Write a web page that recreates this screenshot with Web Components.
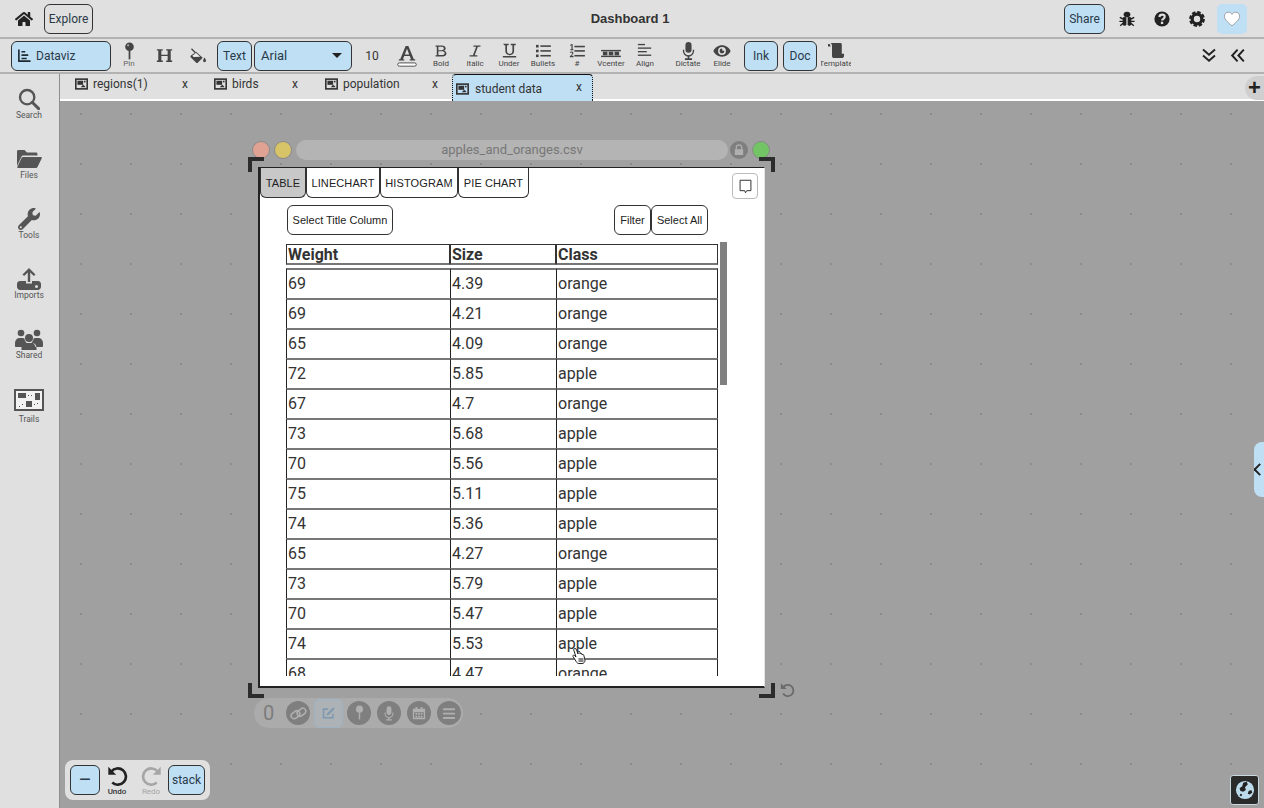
<!DOCTYPE html>
<html lang="en">
<head>
<meta charset="utf-8">
<title>Dashboard 1</title>
<style>
html,body{margin:0;padding:0;height:100%;overflow:hidden}
body{font-family:Roboto,"Liberation Sans",sans-serif;color:#222;background:#e0e0e0}
</style>
</head>
<body>
<app-shell>
  <top-bar></top-bar>
  <tool-bar></tool-bar>
  <div style="display:flex;flex:1;min-height:0">
    <side-bar></side-bar>
    <div style="flex:1;display:flex;flex-direction:column;min-width:0">
      <tab-strip></tab-strip>
      <work-canvas>
        <csv-window></csv-window>
        <float-pill></float-pill>
        <history-panel></history-panel>
        <edge-widgets></edge-widgets>
      </work-canvas>
    </div>
  </div>
</app-shell>
<script>
const ICONS={
home:['0 0 576 512','<path fill="currentColor" d="M280.37 148.26L96 300.11V464a16 16 0 0 0 16 16l112.06-.29a16 16 0 0 0 15.92-16V368a16 16 0 0 1 16-16h64a16 16 0 0 1 16 16v95.64a16 16 0 0 0 16 16.05L464 480a16 16 0 0 0 16-16V300L295.67 148.26a12.19 12.19 0 0 0-15.3 0zM571.6 251.47L488 182.56V44.05a12 12 0 0 0-12-12h-56a12 12 0 0 0-12 12v72.61L318.47 43a48 48 0 0 0-61 0L4.34 251.47a12 12 0 0 0-1.6 16.9l25.5 31A12 12 0 0 0 45.15 301l235.22-193.74a12.19 12.19 0 0 1 15.3 0L530.9 301a12 12 0 0 0 16.9-1.6l25.5-31a12 12 0 0 0-1.7-16.93z"/>'],
chart:['0 0 20 20','<path fill="none" stroke="currentColor" stroke-width="2.2" d="M2.5 2v15.5H18"/><path fill="none" stroke="currentColor" stroke-width="2.2" d="M6 5h5M6 9.500h9M6 14h7"/>'],
pin:['0 0 14 24','<circle cx="7" cy="6" r="5.500" fill="currentColor"/><circle cx="5.200" cy="4.200" r="1.300" fill="#aaa"/><rect x="5.900" y="11" width="2.200" height="11" fill="currentColor"/>'],
H:['0 0 20 20','<path fill="currentColor" d="M1 2.500h7v1.600H6.300v5h7.400v-5H12V2.500h7v1.600h-1.700v11.800H19v1.600h-7v-1.600h1.700v-5.200H6.300v5.200H8v1.600H1v-1.600h1.700V4.100H1z"/>'],
fill:['0 0 24 22','<path fill="currentColor" d="M9.500 5.500l9 8-6.500 6.500a2 2 0 0 1-2.800 0l-7-7a2 2 0 0 1 0-2.800z"/><path stroke="currentColor" stroke-width="1.800" d="M3 1l8 8"/><path fill="#fff" d="M7 8.500l2-2 6 5.500-9 .5-1.800-1.800z" opacity=".9"/><path fill="currentColor" d="M21 13c1.300 2.200 2 3.300 2 4.500a2 2 0 0 1-4 0c0-1.200.7-2.300 2-4.500z"/>'],
A:['0 0 22 24','<path fill="currentColor" d="M9.500 1h3l6 14.500h1.500V17h-6v-1.500h1.500L14 12H8l-1.500 3.500H8V17H2v-1.500h1.500zM11 4l-2.400 6.300h4.800z"/><rect x=".8" y="19.600" width="20.400" height="3.600" rx="1.800" fill="#fff" stroke="#333" stroke-width=".9"/>'],
B:['0 0 18 18','<path fill="currentColor" fill-rule="evenodd" d="M2 2h8c3 0 5 1.400 5 3.700 0 1.500-.9 2.600-2.300 3 2 .4 3.300 1.700 3.300 3.600 0 2.500-2.200 3.700-5 3.700H2v-1.600h1.600V3.600H2zm3.700 1.600v4.300H9.500c1.900 0 3.200-.8 3.200-2.200s-1.300-2.100-3.200-2.100zm0 5.800v4.900h4.200c2 0 3.800-.8 3.800-2.500s-1.700-2.400-3.800-2.400z"/>'],
I:['0 0 18 18','<path fill="currentColor" d="M7 2h9v1.600h-3.300L8.600 14.400H12V16H2v-1.600h4.300L10.500 3.600H7z"/>'],
U:['0 0 18 18','<path fill="currentColor" d="M1.500 1H8v1.600H6v7c0 2.200 1.300 3.400 3.300 3.400s3.200-1.200 3.200-3.400v-7h-2V1h6v1.600h-2v7c0 3-2 5-5.200 5s-5.300-2-5.300-5v-7h-1.500z"/><rect x="1" y="15.600" width="16" height="1.800" fill="currentColor"/>'],
bullets:['0 0 18 16','<g fill="currentColor"><rect x="1" y="1" width="3" height="3"/><rect x="1" y="6.500" width="3" height="3"/><rect x="1" y="12" width="3" height="3"/><rect x="6" y="1.500" width="12" height="1.800"/><rect x="6" y="7" width="12" height="1.800"/><rect x="6" y="12.500" width="12" height="1.800"/></g>'],
numbers:['0 0 18 16','<g fill="currentColor"><rect x="6" y="2" width="12" height="1.800"/><rect x="6" y="7" width="12" height="1.800"/><rect x="6" y="12.500" width="12" height="1.800"/><path d="M1 1l2-1h1v6h1v1H1.300V6h1.300V1.400L1 2zM.8 9.500C1.300 8.800 2 8.600 2.800 8.600c1.200 0 2.100.7 2.100 1.800 0 1-.8 1.700-2.300 3h2.400V15H.8v-1c2-1.800 2.700-2.600 2.700-3.500 0-.5-.3-.8-.8-.8-.4 0-.8.200-1.100.6z"/></g>'],
vcenter:['0 0 22 10','<g fill="currentColor"><rect x="0" y="1" width="22" height="1.600"/><rect x="0" y="7.400" width="22" height="1.600"/><rect x="2" y="3" width="5" height="4"/><rect x="8.500" y="3" width="5" height="4"/><rect x="15" y="3" width="5" height="4"/></g>'],
align:['0 0 18 18','<g fill="currentColor"><rect x="1" y="1" width="8" height="1.500"/><rect x="1" y="5" width="15" height="1.500"/><rect x="1" y="9" width="10" height="1.500"/><rect x="1" y="13" width="15" height="1.500"/></g>'],
mic:['0 0 14 20','<rect x="3.600" y="0" width="6.800" height="12" rx="3.400" fill="currentColor"/><path d="M1.500 8.500v1.500a5.500 5.500 0 0 0 11 0V8.500" fill="none" stroke="currentColor" stroke-width="1.500"/><path d="M7 15v3M3 19h8" stroke="currentColor" stroke-width="1.800"/>'],
eye:['0 0 22 16','<path fill="currentColor" fill-rule="evenodd" d="M11 1C6 1 2.200 4 .5 8c1.700 4 5.500 7 10.500 7s8.800-3 10.500-7C19.800 4 16 1 11 1zm0 2.200a4.800 4.800 0 1 1 0 9.600 4.800 4.800 0 0 1 0-9.600z"/><path fill="currentColor" d="M11 5a3 3 0 1 0 3 3l-2.500-.5z"/>'],
template:['0 0 20 18','<path fill="currentColor" d="M1 1h2l1 3h-3zM6 0h9c1 0 1.500.8 1.500 1.800V12H19v2.500c0 1.400-1 2.500-2.500 2.500H8c-1.500 0-2.500-1-2.500-2.500V3C5.500 2 5 1 4 0z"/>'],
chevDown:['0 0 20 18','<path fill="none" stroke="currentColor" stroke-width="2.400" d="M2.500 1.500L10 8l7.500-6.500M2.500 9L10 15.500 17.500 9"/>'],
chevLeft:['0 0 18 18','<path fill="none" stroke="currentColor" stroke-width="2.400" d="M8.500 2L2 9l6.500 7M16 2L9.500 9l6.500 7"/>'],
bug:['0 0 20 20','<g fill="currentColor"><ellipse cx="10" cy="4.500" rx="4.200" ry="3.500"/><rect x="4.700" y="7.500" width="4.500" height="11" rx="1.800"/><rect x="10.800" y="7.500" width="4.500" height="11" rx="1.800"/></g><path fill="none" stroke="currentColor" stroke-width="1.800" d="M1 8l4 2M19 8l-4 2M.5 13H5M19.500 13H15M1.500 18.500L5.500 15M18.500 18.500L14.500 15"/>'],
help:['0 0 20 20','<circle cx="10" cy="10" r="9.500" fill="currentColor"/><path fill="none" stroke="#e0e0e0" stroke-width="2.600" d="M6.700 7.500c.3-2 1.700-3 3.400-3 1.900 0 3.300 1.100 3.300 2.800 0 2.500-3.300 2.500-3.300 4.700"/><rect x="8.600" y="13.400" width="2.900" height="2.900" fill="#e0e0e0"/>'],
gear:['0 0 20 20','<circle cx="10" cy="10" r="6" fill="none" stroke="currentColor" stroke-width="4"/><circle cx="10" cy="10" r="8.300" fill="none" stroke="currentColor" stroke-width="3.200" stroke-dasharray="4.300 2.220"/>'],
heart:['0 0 22 20','<path fill="#fff" stroke="#777" stroke-width=".8" d="M11 18.500C7 15 1.500 11 1.500 6.500 1.500 3.500 3.800 1.500 6.500 1.500c1.900 0 3.500 1 4.500 2.700 1-1.700 2.600-2.700 4.500-2.700 2.700 0 5 2 5 5C20.500 11 15 15 11 18.500z"/>'],
img:['0 0 16 14','<rect x="1" y="1" width="14" height="12" fill="none" stroke="currentColor" stroke-width="2"/><rect x="3" y="3" width="7" height="5" fill="currentColor"/><path fill="currentColor" d="M7 11l3-3 2 1.500 1 1.500z"/><rect x="11" y="3" width="2" height="2" fill="currentColor"/>'],
search:['0 0 24 24','<circle cx="10" cy="10" r="7.800" fill="none" stroke="currentColor" stroke-width="2.600"/><path d="M15.500 15.500l7 7" stroke="currentColor" stroke-width="3.200" stroke-linecap="round"/>'],
folder:['0 0 26 20','<path fill="currentColor" d="M1 17V2.500C1 1.500 1.600 1 2.500 1h6l2.500 2.500h9c.9 0 1.500.6 1.500 1.500v1.500H7.500c-1 0-1.800.5-2.200 1.400z"/><path fill="currentColor" d="M7 8h18c.7 0 1.100.6.800 1.200L21.500 18c-.3.600-.8 1-1.500 1H2c-.7 0-1-.5-.7-1.100L5.500 9C5.800 8.400 6.300 8 7 8z"/>'],
wrench:['0 0 512 512','<path fill="currentColor" d="M507.730 109.100c-2.240-9.030-13.540-12.090-20.120-5.510l-74.360 74.360-67.880-11.310-11.310-67.880 74.360-74.360c6.620-6.620 3.430-17.900-5.660-20.160-47.380-11.740-99.550.91-136.580 37.930-39.640 39.640-50.550 97.100-34.050 147.200L18.740 402.760c-24.990 24.990-24.990 65.510 0 90.500 24.990 24.990 65.510 24.990 90.500 0l213.210-213.210c50.120 16.710 107.470 5.680 147.370-34.220 37.070-37.070 49.700-89.320 37.910-136.730zM64 472c-13.250 0-24-10.750-24-24 0-13.260 10.750-24 24-24s24 10.740 24 24c0 13.250-10.750 24-24 24z"/>'],
upload:['0 0 24 22','<path fill="currentColor" d="M12 0l6.500 6.500-1.600 1.600-3.700-3.600V14h-2.400V4.500L7.100 8.100 5.500 6.500z"/><path fill="currentColor" fill-rule="evenodd" d="M3 13h6v2.500h6V13h6c1.500 0 3 1 3 3v3c0 1.500-1.500 3-3 3H3c-1.500 0-3-1.500-3-3v-3c0-2 1.500-3 3-3zm16.500 4a1.500 1.500 0 1 0 0 3 1.500 1.500 0 0 0 0-3z"/>'],
users:['0 0 28 21','<g fill="currentColor"><circle cx="6" cy="4" r="3.300"/><circle cx="22" cy="4" r="3.300"/><circle cx="14" cy="9" r="4"/><path d="M0 14c0-3 2-5 4.500-5h3c.8 0 1.500.3 2 .6 0 1.600.9 3 2 3.900-2.200.8-3.500 2.500-4 4.500H1c-.6 0-1-.4-1-1zM28 14c0-3-2-5-4.500-5h-3c-.8 0-1.500.3-2 .6 0 1.600-.9 3-2 3.900 2.200.8 3.500 2.500 4 4.500H27c.6 0 1-.4 1-1zM11 14h6c2.500 0 4.500 2 4.500 4.500V21h-15v-2.500C6.500 16 8.500 14 11 14z"/></g>'],
trails:['0 0 30 22','<rect x="1" y="1" width="28" height="20" fill="#f2f2f2" stroke="currentColor" stroke-width="2"/><g fill="currentColor"><rect x="4" y="4" width="8" height="5"/><rect x="21" y="4" width="5" height="7"/><rect x="12" y="12" width="6" height="6"/><path d="M14 6h1v1h-1zM17 6h1v1h-1zM5 17h1v1H5zM8 15h1v1H8zM20 15h1v1h-1zM23 14h1v1h-1z"/></g>'],
undo:['0 0 24 24','<path fill="none" stroke="currentColor" stroke-width="3" d="M5 7.500A9.300 9.300 0 1 1 6 20"/><path fill="currentColor" d="M1.500 2v9h9z"/>'],
redo:['0 0 24 24','<path fill="none" stroke="currentColor" stroke-width="3" d="M19 7.500A9.300 9.300 0 1 0 18 20"/><path fill="currentColor" d="M22.500 2v9h-9z"/>'],
link:['0 0 20 20','<g fill="none" stroke="currentColor" stroke-width="1.800"><rect x="1" y="8" width="11" height="7" rx="3.500" transform="rotate(-38 6.500 11.500)"/><rect x="8" y="5" width="11" height="7" rx="3.500" transform="rotate(-38 13.500 8.500)"/></g>'],
edit:['0 0 18 18','<path fill="none" stroke="currentColor" stroke-width="2" d="M14 10v5H2V4h6"/><path fill="currentColor" d="M6.500 9.500L14.500 1.500l2 2-8 8-2.500.5z"/>'],
calendar:['0 0 16 16','<path fill="currentColor" fill-rule="evenodd" d="M1 3h3V1h2v2h4V1h2v2h3v12H1zm1.500 4v6.500h11V7zM4 8h2v2H4zm3 0h2v2H7zm3 0h2v2h-2zM4 11h2v2H4zm3 0h2v2H7zm3 0h2v2h-2z"/>'],
menu:['0 0 16 14','<rect x="1" y="1" width="14" height="2.200" rx="1" fill="currentColor"/><rect x="1" y="6" width="14" height="2.200" rx="1" fill="currentColor"/><rect x="1" y="11" width="14" height="2.200" rx="1" fill="currentColor"/>'],
lock:['0 0 12 14','<path fill="currentColor" d="M2 6V4a4 4 0 0 1 8 0v2h1v7H1V6zm1.500 0h5V4a2.500 2.500 0 0 0-5 0z"/>'],
comment:['0 0 18 18','<path fill="#fff" stroke="#222" stroke-width="1.100" d="M2.500 1.500h13v12.500H10.500l-1.500 2.500-1-2.500H2.500z"/>'],
rotate:['0 0 18 18','<path fill="none" stroke="currentColor" stroke-width="2" d="M4 5.500A6.300 6.300 0 1 1 3.500 13"/><path fill="currentColor" d="M1 1.500v6.500h6.500z"/>'],
globe:['0 0 22 22','<circle cx="11" cy="11" r="10" fill="#bcdcec"/><path fill="#222" d="M9 3l4-1 1 3-3 3 1 3-3 2-3-1-1-3 3-2zM15 12l3-1 1 3-3 2-2-1zM6 15l2 1-1 2-2-1z"/>'],
hand:['0 0 16 18','<path fill="#fff" stroke="#222" stroke-width="1" d="M4 1.500c.8 0 1.300.6 1.500 1.300L7 7V5.200c0-1.200 1.800-1.200 2 0V7c.2-1 1.800-1 2 0v1c.3-.8 1.700-.7 1.800.3L14 13c.1 2-1.200 3.500-3 3.500H8c-1.200 0-2-.6-2.700-1.800L2 9.500c-.6-1 .7-1.900 1.500-1L5 10 2.800 3.300C2.500 2.300 3.100 1.500 4 1.500z"/><rect x="7.500" y="11" width="5" height="4" fill="#888"/>']
};
function icon(name,w,h,color,extra){
  const [vb,body]=ICONS[name];
  return `<svg xmlns="http://www.w3.org/2000/svg" viewBox="${vb}" width="${w}" height="${h}" style="display:block;flex:none;${color?'color:'+color+';':''}${extra||''}" aria-hidden="true">${body}</svg>`;
}
function define(tag,css,html){
  customElements.define(tag,class extends HTMLElement{
    constructor(){super();const r=this.attachShadow({mode:'open'});r.innerHTML=`<style>${css}</style>${typeof html==='function'?html():html}`;}
  });
}
const BTN=`.btn{box-sizing:border-box;display:flex;align-items:center;justify-content:center;border:1px solid #333;border-radius:6px;background:#bfdff5;color:#2a3a48;font:12px Roboto,"Liberation Sans",sans-serif;height:30px}`;

define('app-shell',`:host{display:flex;flex-direction:column;width:1264px;height:808px;overflow:hidden;background:#e0e0e0}`,`<slot></slot>`);

define('top-bar',`${BTN}
:host{display:block;flex:none}
.bar{display:grid;grid-template-columns:1fr auto 1fr;align-items:center;box-sizing:border-box;height:39px;border-bottom:2px solid #b2b2b2;padding:0 17px 0 15px;background:#e0e0e0;color:#222}
.l,.r{display:flex;align-items:center}
.r{justify-content:flex-end}
.explore{width:49px;margin-left:11px;background:#e0e0e0}
.title{font:bold 13px "Liberation Sans",Arial,sans-serif;color:#333;position:relative;left:-1px}
.share{width:41px}
.ic{width:35px;display:flex;justify-content:center}
.heart{width:30px;height:30px;background:#bfdff5;border-radius:5px;display:flex;align-items:center;justify-content:center;margin-left:3px}
`,()=>`<div class="bar"><div class="l">${icon('home',18,16)}<div class="btn explore">Explore</div></div><div class="title">Dashboard 1</div><div class="r"><div class="btn share" style="margin-right:4px">Share</div><div class="ic">${icon('bug',16,16)}</div><div class="ic">${icon('help',16,16)}</div><div class="ic">${icon('gear',16,16)}</div><div class="heart">${icon('heart',18,16)}</div></div></div>`);

const ti=(ic,w,h,label,color)=>`<div class="ti"><div class="ii">${icon(ic,w,h)}</div><span style="${color?'color:'+color:''}">${label}</span></div>`;
define('tool-bar',`${BTN}
:host{display:block;flex:none}
.bar{display:flex;align-items:center;box-sizing:border-box;height:35px;border-bottom:2px solid #b2b2b2;padding:0 0 0 11px;color:#222;background:#e0e0e0}
.dv{width:100px;justify-content:flex-start;padding-left:5px;gap:4px;font-size:12px}
.ti{box-sizing:border-box;width:34px;height:30px;display:flex;flex-direction:column;align-items:center;font:8px Roboto,"Liberation Sans",sans-serif;color:#444;white-space:nowrap;overflow:visible}
.ii{height:20px;display:flex;align-items:center;justify-content:center}
.ti span{line-height:8px;margin-top:-1px}
.sel{width:98px;justify-content:space-between;padding:0 9px 0 6px;margin-left:2px;font-size:13px}
.caret{width:0;height:0;border:5px solid transparent;border-top:5px solid #222;border-bottom:0}
.num{width:34px;text-align:center;font-size:12px;color:#333;margin-right:1px}
.sp{flex:1}
`,()=>`<div class="bar">
<div class="btn dv">${icon('chart',15,15,'#1f2a33')}<span>Dataviz</span></div>
<div style="width:1px"></div>
<div class="ti"><div class="ii" style="margin-top:1px">${icon('pin',11,19)}</div><span style="color:#666;margin-top:-2px">Pin</span></div>
<div class="ti" style="margin-left:1px"><div class="ii" style="height:30px">${icon('H',17,17)}</div></div>
<div class="ti"><div class="ii" style="height:30px">${icon('fill',18,16)}</div></div>
<div class="btn" style="width:35px;margin-left:2px">Text</div>
<div class="btn sel"><span>Arial</span><span class="caret"></span></div>
<div style="width:3px"></div>
<div class="num">10</div>
<div class="ti"><div class="ii" style="height:30px">${icon('A',20,22)}</div></div>
${ti('B',14,14,'Bold')}${ti('I',14,14,'Italic')}${ti('U',15,15,'Under')}${ti('bullets',16,14,'Bullets')}${ti('numbers',16,14,'#')}
<div class="ti"><div class="ii" style="padding-top:6px;height:14px">${icon('vcenter',20,9)}</div><span>Vcenter</span></div>
${ti('align',16,16,'Align')}
<div style="width:9px"></div>
${ti('mic',13,18,'Dictate')}${ti('eye',18,14,'Elide')}
<div class="btn" style="width:34px;margin-left:5px">Ink</div>
<div class="btn" style="width:34px;margin-left:5px">Doc</div>
<div class="ti" style="margin-left:4px;width:30px;overflow:hidden"><div class="ii">${icon('template',18,16)}</div><span>Template</span></div>
<div class="sp"></div>
<div style="margin-right:13px">${icon('chevDown',16,15)}</div><div style="margin-right:18px">${icon('chevLeft',16,15)}</div>
</div>`);

const side=(ic,w,h,label)=>`<div class="it"><div class="i">${icon(ic,w,h)}</div><span>${label}</span></div>`;
define('side-bar',`:host{display:block;flex:none;width:60px;box-sizing:border-box;border-right:1px solid #8e8e8e;background:#e0e0e0;color:#222}
.wrap{display:flex;flex-direction:column;align-items:center;padding:13px 1px 0 0}
.it{height:60px;display:flex;flex-direction:column;align-items:center;font:8.500px Roboto,"Liberation Sans",sans-serif;color:#555}
.i{height:24px;display:flex;align-items:center;justify-content:center}
span{line-height:9px}
`,()=>`<div class="wrap">${side('search',22,22,'Search')}${side('folder',26,20,'Files')}${side('wrench',22,22,'Tools')}${side('upload',24,22,'Imports')}${side('users',28,21,'Shared')}<div class="it" style="padding-top:1px"><div class="i" style="margin-bottom:3px">${icon('trails',30,22)}</div><span>Trails</span></div></div>`);

const tab=(w,pad,label,xAt)=>`<div class="tab" style="width:${w}px;padding-left:${pad}px">${icon('img',13,12,'#333')}<span class="l">${label}</span><span class="x" style="left:${xAt}px">x</span></div>`;
define('tab-strip',`:host{display:block;flex:none;position:relative}
.row{display:flex;box-sizing:border-box;height:27px;background:#e0e0e0;border-bottom:2px solid #fff;align-items:stretch}
.tab{box-sizing:border-box;position:relative;display:flex;align-items:center;gap:5px;padding-bottom:5px;font:12px Roboto,"Liberation Sans",sans-serif;color:#333}
.x{position:absolute;top:3px;font-size:12px}
.active{box-sizing:border-box;width:141px;height:27px;margin-left:3px;background:#bfdff5;border:1px dotted #111;border-top:1px solid #111;border-bottom:0;border-radius:4px 4px 0 0;display:flex;align-items:center;padding:1px 0 0 3px;gap:6px;position:relative;font:12px Roboto,"Liberation Sans",sans-serif;color:#333}
.plus{position:absolute;right:0;top:2px;width:19px;height:24px;border-radius:12px 0 0 12px;background:#cfcfcf;display:flex;align-items:center;justify-content:center;font:bold 22px "Liberation Sans",sans-serif;color:#222;line-height:1}
`,()=>`<div class="row">
<div class="tab" style="width:14px"></div>
${tab(140,1,'regions(1)',108)}${tab(110,0,'birds',78)}${tab(125,1,'population',108)}
<div class="active">${icon('img',13,12,'#333')}<span>student data</span><span class="x" style="left:123px;top:5px">x</span></div>
</div><div class="plus">+</div>`);

define('work-canvas',`:host{display:block;flex:1;position:relative;overflow:hidden;background-color:#a0a0a0;background-image:radial-gradient(circle at center,#8a8a8a 0,#8a8a8a .7px,transparent 1px);background-size:50px 50px;background-position:-54px -112px}`,`<slot></slot>`);

const tabBtn=(w,t,sel)=>`<div class="ct${sel?' sel':''}" style="width:${w}px">${t}</div>`;
const rows=[[69,'4.39','orange'],[69,'4.21','orange'],[65,'4.09','orange'],[72,'5.85','apple'],[67,'4.7','orange'],[73,'5.68','apple'],[70,'5.56','apple'],[75,'5.11','apple'],[74,'5.36','apple'],[65,'4.27','orange'],[73,'5.79','apple'],[70,'5.47','apple'],[74,'5.53','apple'],[68,'4.47','orange']];
define('csv-window',`:host{display:block;position:absolute;left:192px;top:39px;width:518px;height:560px}
.head{display:flex;align-items:center;height:20px}
.dot{width:18px;height:18px;box-sizing:border-box;border-radius:50%;border:1px solid #8a8a8a;flex:none}
.pill{flex:1;height:20px;margin:0 2px 0 4px;border-radius:10px;background:#b4b4b4;color:#777;font:13px Roboto,"Liberation Sans",sans-serif;display:flex;align-items:center;justify-content:center;padding-bottom:1px;box-sizing:border-box}
.lock{width:18px;height:18px;border-radius:50%;background:#7f7f7f;display:flex;align-items:center;justify-content:center;flex:none}
.frame{box-sizing:border-box;position:relative;margin:7px 0 0 6px;width:507px;height:521px;background:#fff;border-top:1px solid #222;border-left:2px solid #222;border-right:1px solid #e4e4e4;border-bottom:2px solid #222;display:flex;flex-direction:column}
.tabs{display:flex;height:30px;flex:none}
.ct{box-sizing:border-box;height:30px;border:1px solid #333;border-top:0;border-radius:0 0 6px 6px;display:flex;align-items:center;justify-content:center;font:11px "Liberation Sans",Arial,sans-serif;color:#222;background:#fff;letter-spacing:.1px}
.ct.sel{background:#c8c8c8}
.cm{box-sizing:border-box;width:26px;height:26px;margin:5px 6px 0 auto;border:1px solid #bbb;border-radius:4px;display:flex;align-items:center;justify-content:center}
.acts{display:flex;margin:7px 0 0 27px;width:421px;flex:none}
.b{box-sizing:border-box;height:30px;border:1px solid #333;border-radius:6px;display:flex;align-items:center;justify-content:center;font:11px "Liberation Sans",Arial,sans-serif;color:#222;background:#fff}
.scroll{position:relative;margin:7px 0 0 26px;width:442px;height:434px;overflow:hidden;flex:none;padding-top:2px;box-sizing:border-box}
.sb{position:absolute;left:434px;top:0;width:7px;height:143px;background:#808080}
.grid{display:grid;grid-template-columns:164px 106px 162px;width:432px}
.th{box-sizing:border-box;height:21px;border:1px solid #333;border-bottom:2px solid #777;font:bold 16px/20px Roboto,"Liberation Sans",sans-serif;color:#333;padding-left:1px;margin-bottom:3px;white-space:nowrap}
.td{box-sizing:border-box;height:30px;border-top:2px solid #777;border-left:1px solid #222;font:16px/27px Roboto,"Liberation Sans",sans-serif;color:#333;padding-left:1px}
.td.end{border-right:1px solid #222}
.k{position:absolute;border:0 solid #2c2c2c;width:12px;height:11px}
.hand{position:absolute;left:319px;top:507px}
.rot{position:absolute;left:528px;top:542px}
`,()=>`<div class="head"><div class="dot" style="background:#e0a393"></div><div class="dot" style="margin-left:4px;background:#d8c468"></div><div class="pill">apples_and_oranges.csv</div><div class="lock">${icon('lock',10,12,'#b0b0b0')}</div><div class="dot" style="margin-left:4px;background:#72c465"></div></div>
<div class="frame">
<div class="tabs">${tabBtn(46,'TABLE',1)}${tabBtn(74,'LINECHART')}${tabBtn(78,'HISTOGRAM')}${tabBtn(71,'PIE CHART')}<div class="cm">${icon('comment',15,15)}</div></div>
<div class="acts"><div class="b" style="width:106px">Select Title Column</div><div class="b" style="width:37px;margin-left:auto">Filter</div><div class="b" style="width:57px">Select All</div></div>
<div class="scroll"><div class="grid"><div class="th">Weight</div><div class="th">Size</div><div class="th">Class</div>${rows.map(r=>`<div class="td">${r[0]}</div><div class="td">${r[1]}</div><div class="td end">${r[2]}</div>`).join('')}</div><div class="sb"></div></div>
</div>
<div class="k" style="left:-4px;top:17px;border-width:4px 0 0 4px"></div>
<div class="k" style="right:-5px;top:17px;border-width:4px 4px 0 0"></div>
<div class="k" style="left:-4px;top:543px;border-width:0 0 4px 4px"></div>
<div class="k" style="right:-5px;top:543px;border-width:0 4px 4px 0"></div>
<div class="hand">${icon('hand',16,18)}</div>
<div class="rot">${icon('rotate',16,16,'#6a6a6a')}</div>`);

define('float-pill',`:host{display:block;position:absolute;left:194px;top:597px}
.p{display:flex;align-items:center;box-sizing:border-box;height:30px;width:209px;border-radius:15px;background:#ababab;padding-left:9px}
.z{width:10px;font:20px Roboto,"Liberation Sans",sans-serif;color:#7c7c7c;margin-right:13px}
.c{width:24px;height:24px;border-radius:50%;background:#7f7f7f;display:flex;align-items:center;justify-content:center;color:#b0b0b0;margin-right:6px;flex:none}
.e{box-sizing:border-box;width:29px;height:29px;border:1px solid #9fb2c2;border-radius:5px;background:#adb2b6;display:flex;align-items:center;justify-content:center;margin:0 2px 0 -2px;flex:none}
`,()=>`<div class="p"><span class="z">0</span><div class="c">${icon('link',17,17)}</div><div class="e">${icon('edit',14,14,'#7f9ab0')}</div><div class="c" style="margin-left:2px">${icon('pin',9,16)}</div><div class="c">${icon('mic',10,15)}</div><div class="c">${icon('calendar',14,14)}</div><div class="c">${icon('menu',14,13)}</div></div>`);

define('history-panel',`${BTN}
:host{display:block;position:absolute;left:5px;top:659px}
.p{display:flex;align-items:flex-start;box-sizing:border-box;width:145px;height:40px;background:#e0e0e0;border-radius:8px;padding:5px}
.u{width:34px;display:flex;flex-direction:column;align-items:center;font:8px Roboto,"Liberation Sans",sans-serif;color:#333;line-height:8px}
.u span{margin-top:2px}
`,()=>`<div class="p"><div class="btn" style="width:30px;font-size:20px">–</div><div class="u">${icon('undo',21,21,'#222')}<span style="font-weight:500">Undo</span></div><div class="u">${icon('redo',21,21,'#a6a6a6')}<span style="color:#a6a6a6">Redo</span></div><div class="btn" style="width:37px">stack</div></div>`);

define('edge-widgets',`:host{display:block}
.side{position:absolute;right:0;top:341px;width:10px;height:55px;background:#bfdff5;border-radius:8px 0 0 8px;display:flex;align-items:center;justify-content:flex-end;overflow:hidden}
.d{width:7px;height:7px;border:solid #222;border-width:0 0 2px 2px;transform:rotate(45deg);flex:none}
.globe{box-sizing:border-box;position:absolute;left:1170px;top:674px;width:29px;height:30px;background:#2b2b2b;border:1px solid #c8d8e0;border-radius:3px;display:flex;align-items:center;justify-content:center}
`,()=>`<div class="side"><div class="d"></div></div><div class="globe">${icon('globe',20,20)}</div>`);
</script>
</body>
</html>
